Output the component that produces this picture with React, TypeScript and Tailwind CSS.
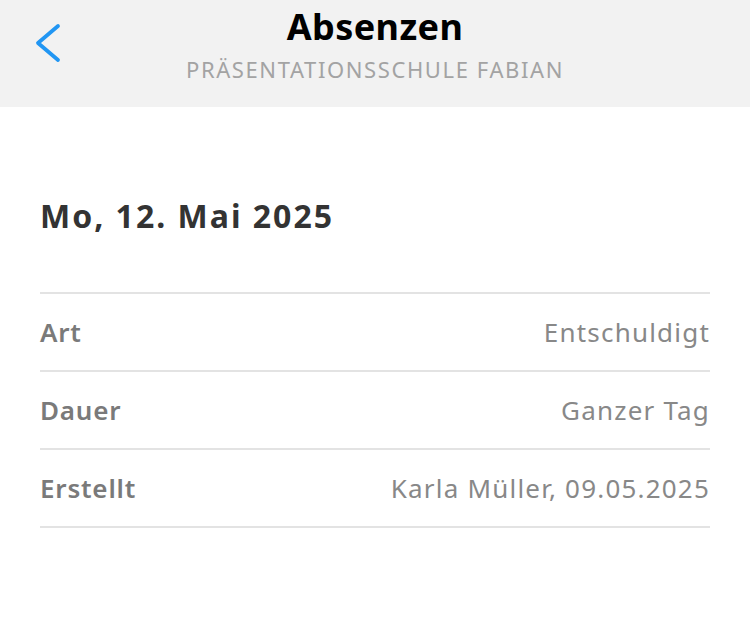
const rows = [
  { label: "Art", value: "Entschuldigt" },
  { label: "Dauer", value: "Ganzer Tag" },
  { label: "Erstellt", value: "Karla Müller, 09.05.2025" },
];

function BackChevron() {
  return (
    <svg width="28" height="40" viewBox="0 0 28 40" fill="none" aria-hidden>
      <polyline
        points="23,3 3,20 23,37"
        stroke="currentColor"
        strokeWidth="3.8"
        strokeLinecap="round"
        strokeLinejoin="round"
      />
    </svg>
  );
}

export default function App() {
  return (
    <div className="min-h-[618px] w-[750px] bg-white font-['Noto_Sans',sans-serif]">
      <header className="relative flex h-[107px] flex-col items-center bg-[#f2f2f2] pt-[2px]">
        <button
          type="button"
          aria-label="Zurück"
          className="absolute left-[35px] top-[23px] text-[#2196f3]"
        >
          <BackChevron />
        </button>
        <h1 className="text-[36px] font-bold leading-[50px] tracking-[0.4px] text-black">Absenzen</h1>
        <p className="mt-[2px] text-[22px] leading-[30px] tracking-[1.6px] text-[#a3a3a3]">
          PRÄSENTATIONSSCHULE FABIAN
        </p>
      </header>

      <main className="px-[40px] pt-[88px]">
        <h2 className="text-[32px] font-bold leading-[42px] tracking-[2px] text-[#333333]">
          Mo, 12. Mai 2025
        </h2>
        <div className="mt-[55px] border-t-2 border-[#e3e3e3]">
          {rows.map((row) => (
            <div
              key={row.label}
              className="flex h-[78px] items-center justify-between border-b-2 border-[#e3e3e3] text-[26px]"
            >
              <span className="font-semibold tracking-[0.8px] text-[#7a7a7a]">{row.label}</span>
              <span className="tracking-[1.2px] text-[#888888]">{row.value}</span>
            </div>
          ))}
        </div>
      </main>
    </div>
  );
}
